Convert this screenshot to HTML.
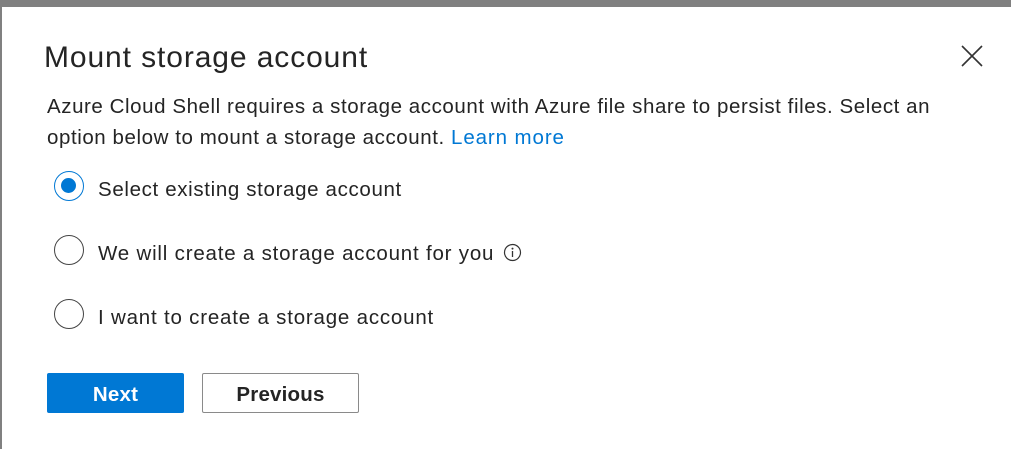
<!DOCTYPE html>
<html><head><style>
*{margin:0;padding:0;box-sizing:border-box}
body{width:1011px;height:449px;background:#fff;position:relative;overflow:hidden;font-family:"Liberation Sans",sans-serif;color:#242424}
.top{position:absolute;left:0;top:0;width:1011px;height:7px;background:#808080}
.left{position:absolute;left:0;top:0;width:2px;height:449px;background:#808080}
.t{position:absolute;white-space:nowrap;font-size:20.5px;letter-spacing:0.65px}
.r{position:absolute;left:54px;width:30px;height:30px;border:1.5px solid #444;border-radius:50%}
.btn{position:absolute;top:373px;height:40px;border-radius:2px;font-size:20.5px;text-align:center;line-height:44px;font-weight:bold;letter-spacing:0.2px}
</style></head><body>
<div class="top"></div><div class="left"></div>
<div class="t" style="left:44px;top:41px;font-size:30px;letter-spacing:0.9px">Mount storage account</div>
<svg style="position:absolute;left:961px;top:45px" width="22" height="22"><path d="M1 1L21 21M21 1L1 21" stroke="#333" stroke-width="1.6"/></svg>
<div class="t" style="left:47px;top:91px;line-height:31px;letter-spacing:0.57px">Azure Cloud Shell requires a storage account with Azure file share to persist files. Select an<br>option below to mount a storage account. <span style="color:#0078d4;letter-spacing:0.9px">Learn more</span></div>
<div class="r" style="top:171px;border-color:#0078d4"><div style="position:absolute;left:6px;top:6px;width:15px;height:15px;border-radius:50%;background:#0078d4"></div></div>
<div class="t" style="left:98px;top:178px">Select existing storage account</div>
<div class="r" style="top:235px"></div>
<div class="t" style="left:98px;top:242px;letter-spacing:0.8px">We will create a storage account for you <svg style="vertical-align:-2px;margin-left:2px" width="19" height="19"><circle cx="9.5" cy="9.5" r="8" fill="none" stroke="#333" stroke-width="1.2"/><circle cx="9.5" cy="5.6" r="1" fill="#333"/><path d="M9.5 8V14" stroke="#333" stroke-width="1.3"/></svg></div>
<div class="r" style="top:299px"></div>
<div class="t" style="left:98px;top:306px;letter-spacing:0.8px">I want to create a storage account</div>
<div class="btn" style="left:47px;width:137px;background:#0078d4;color:#fff">Next</div>
<div class="btn" style="left:202px;width:157px;border:1px solid #8a8a8a;color:#242424;line-height:42px">Previous</div>
</body></html>
